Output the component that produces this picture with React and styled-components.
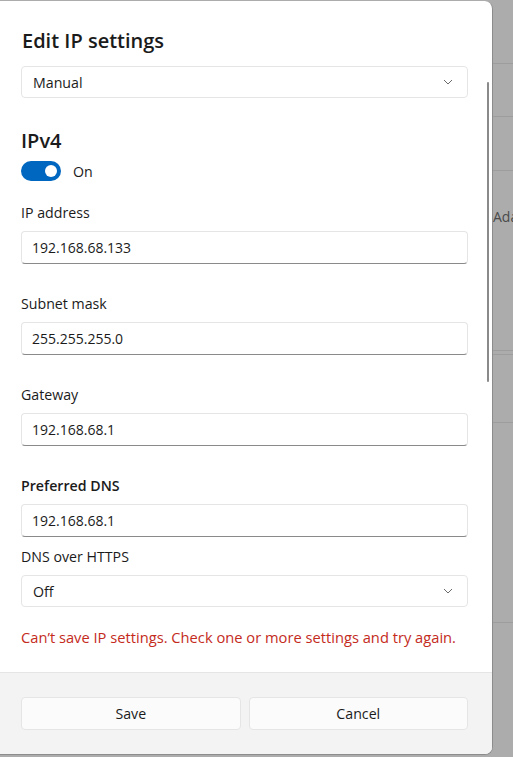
import React from 'react'
import styled, { createGlobalStyle } from 'styled-components'

const GlobalStyle = createGlobalStyle`
  html, body {
    margin: 0;
    padding: 0;
    background: #acacac;
    font-family: "Open Sans", "Noto Sans", sans-serif;
    color: #1b1b1b;
  }
`

const Page = styled.div`
  display: flex;
  width: 513px;
  height: 757px;
  overflow: hidden;
`

const Dialog = styled.div`
  position: relative;
  flex: 0 0 492px;
  margin-top: 1px;
  height: 753px;
  background: #fff;
  border-right: 1px solid #8c8c8c;
  border-bottom: 1px solid #8c8c8c;
  border-radius: 0 8px 8px 0;
  display: flex;
  flex-direction: column;
  overflow: hidden;
`

const Body = styled.div`
  flex: 1;
  padding: 26px 24px 0 21px;
  display: flex;
  flex-direction: column;
`

const Title = styled.h1`
  margin: 0 0 11px 1px;
  font-size: 20px;
  font-weight: 600;
  line-height: 28px;
`

const Heading = styled.h2`
  margin: 30px 0 6px 0;
  font-size: 20px;
  font-weight: 600;
  line-height: 26px;
`

const Select = styled.div`
  display: flex;
  align-items: center;
  justify-content: space-between;
  height: 30px;
  padding: 0 14px 0 11px;
  border: 1px solid #e5e5e5;
  border-radius: 4px;
  font-size: 14.2px;
  background: #fff;
`

const Chevron = () => (
  <svg width="10" height="6" viewBox="0 0 10 6">
    <path d="M1 1 L5 5 L9 1" fill="none" stroke="#6b6b6b" strokeWidth="1" />
  </svg>
)

const ToggleRow = styled.div`
  display: flex;
  align-items: center;
  gap: 12px;
  height: 22px;
  font-size: 14.2px;
`

const Toggle = styled.div`
  width: 40px;
  height: 20px;
  border-radius: 10px;
  background: #0067c0;
  display: flex;
  align-items: center;
  justify-content: flex-end;
  padding-right: 4px;
  box-sizing: border-box;

  &::after {
    content: '';
    width: 12px;
    height: 12px;
    border-radius: 50%;
    background: #fff;
  }
`

const Field = styled.div`
  display: flex;
  flex-direction: column;
  margin-top: ${p => p.gap}px;
`

const Label = styled.label`
  font-size: 14.2px;
  font-weight: ${p => (p.strong ? 600 : 400)};
  line-height: 20px;
  margin-bottom: 8px;
`

const Input = styled.div`
  height: 31px;
  display: flex;
  align-items: center;
  padding: 0 10px;
  border: 1px solid #e5e5e5;
  border-bottom: 1px solid #8a8a8a;
  border-radius: 4px;
  font-size: 14px;
`

const Error = styled.p`
  margin: 20px 0 0 0;
  font-size: 14.7px;
  line-height: 20px;
  color: #c42b1c;
`

const Footer = styled.div`
  height: 82px;
  background: #f3f3f3;
  border-top: 1px solid #e5e5e5;
  padding: 24px 24px 0 21px;
  box-sizing: border-box;
  display: grid;
  grid-template-columns: 1fr 1fr;
  column-gap: 8px;
  align-items: start;
`

const Button = styled.button`
  height: 33px;
  border: 1px solid #e5e5e5;
  border-radius: 4px;
  background: #fbfbfb;
  font-family: inherit;
  font-size: 14.2px;
  color: #1b1b1b;
`

const Scrollbar = styled.div`
  position: absolute;
  top: 81px;
  right: 3px;
  width: 2px;
  height: 300px;
  border-radius: 1px;
  background: #8a8a8a;
`

const Behind = styled.div`
  flex: 1;
  display: flex;
  flex-direction: column;
  background: #acacac;
`

const BehindRow = styled.div`
  height: ${p => p.h}px;
  border-bottom: 1px solid #9d9d9d;
  box-sizing: border-box;
  padding-top: ${p => p.pad || 0}px;
  font-size: 14px;
  line-height: 20px;
  color: #4a4a4a;
  white-space: nowrap;
  overflow: hidden;
`

const fields = [
  { label: 'IP address', value: '192.168.68.133', gap: 21 },
  { label: 'Subnet mask', value: '255.255.255.0', gap: 30 },
  { label: 'Gateway', value: '192.168.68.1', gap: 30 },
  { label: 'Preferred DNS', value: '192.168.68.1', gap: 30, strong: true }
]

export default function App() {
  return (
    <>
      <GlobalStyle />
      <Page>
        <Dialog>
          <Body>
            <Title>Edit IP settings</Title>
            <Select>
              <span>Manual</span>
              <Chevron />
            </Select>
            <Heading>IPv4</Heading>
            <ToggleRow>
              <Toggle />
              <span>On</span>
            </ToggleRow>
            {fields.map(f => (
              <Field key={f.label} gap={f.gap}>
                <Label strong={f.strong}>{f.label}</Label>
                <Input>{f.value}</Input>
              </Field>
            ))}
            <Field gap={10}>
              <Label>DNS over HTTPS</Label>
              <Select>
                <span>Off</span>
                <Chevron />
              </Select>
            </Field>
            <Error>Can’t save IP settings. Check one or more settings and try again.</Error>
          </Body>
          <Footer>
            <Button>Save</Button>
            <Button>Cancel</Button>
          </Footer>
          <Scrollbar />
        </Dialog>
        <Behind>
          <BehindRow h={64} />
          <BehindRow h={53} />
          <BehindRow h={54} />
          <BehindRow h={180} pad={36}>Ada</BehindRow>
          <BehindRow h={4} />
          <BehindRow h={68} />
          <BehindRow h={200} />
        </Behind>
      </Page>
    </>
  )
}
